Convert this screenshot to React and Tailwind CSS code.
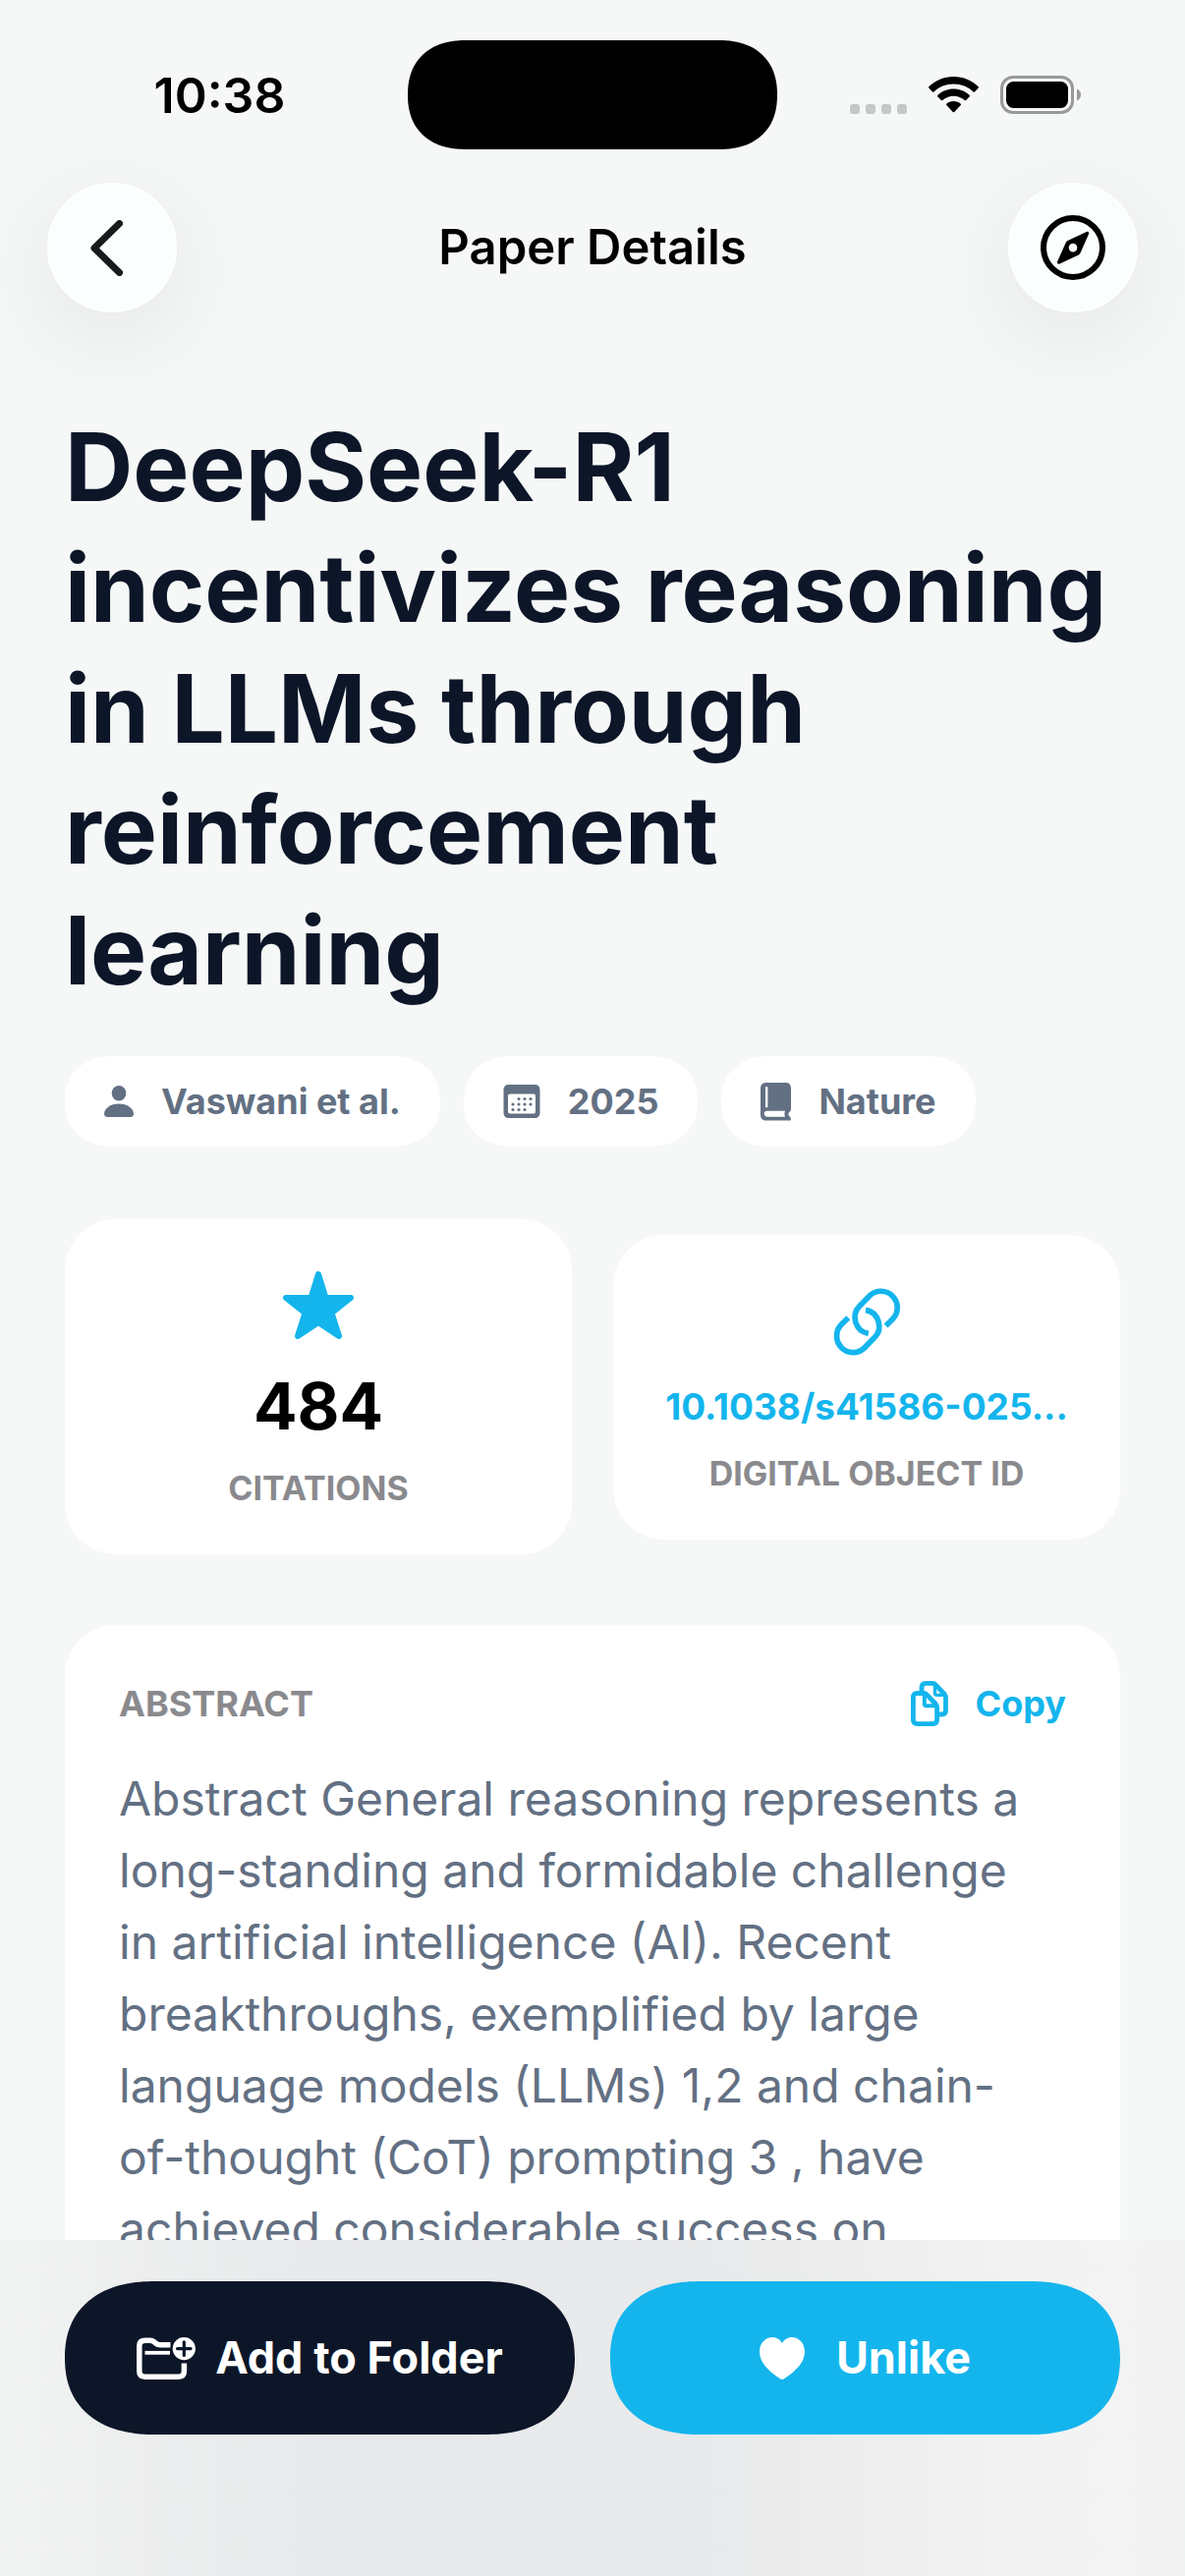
const abstractText =
  'Abstract General reasoning represents a long-standing and formidable challenge in artificial intelligence (AI). Recent breakthroughs, exemplified by large language models (LLMs) 1,2 and chain-of-thought (CoT) prompting 3 , have achieved considerable success on'

function WifiIcon({ className }) {
  return (
    <svg viewBox="0 0 51 37" className={className} fill="currentColor" aria-hidden="true">
      <path d="M25.500 0C35.300 0 44.200 3.900 50.700 10.200c.4.400.4 1 0 1.400l-3.700 3.800c-.4.400-1 .4-1.400 0C40.300 10.300 33.300 7.400 25.500 7.400S10.700 10.300 5.400 15.400c-.4.400-1 .4-1.400 0L.3 11.600c-.4-.4-.4-1 0-1.400C6.800 3.900 15.700 0 25.500 0z" />
      <path d="M25.500 12.500c6.300 0 12 2.400 16.300 6.400.4.400.4 1 0 1.400l-3.700 3.700c-.4.400-1 .4-1.400 0-3-2.700-6.900-4.300-11.200-4.300s-8.200 1.600-11.200 4.300c-.4.400-1 .4-1.400 0l-3.700-3.700c-.4-.4-.4-1 0-1.400 4.300-4 10-6.400 16.300-6.400z" />
      <path d="M25.500 25c2.800 0 5.400 1 7.300 2.700.4.400.4 1 0 1.400l-6.600 6.900c-.4.400-1 .4-1.400 0l-6.600-6.900c-.4-.4-.4-1 0-1.400 1.900-1.700 4.500-2.700 7.300-2.700z" />
    </svg>
  )
}

function BatteryIcon({ className }) {
  return (
    <svg viewBox="0 0 82 39" className={className} aria-hidden="true">
      <rect x="1.500" y="1.500" width="72" height="36" rx="11.500" fill="none" stroke="#989a99" strokeWidth="3" />
      <rect x="6" y="6" width="63" height="27" rx="7.500" fill="#000" />
      <path d="M78 13.500c2.400 1 4 3.300 4 6s-1.600 5-4 6z" fill="#989a99" />
    </svg>
  )
}

function CompassIcon({ className }) {
  return (
    <svg viewBox="0 0 66 66" className={className} aria-hidden="true">
      <circle cx="33" cy="33" r="30" fill="none" stroke="currentColor" strokeWidth="6" />
      <path fill="currentColor" fillRule="evenodd" d="M46.700 17c1.500-.8 3 .5 2.300 2.200L40.500 38.500c-.4.900-.9 1.400-1.800 1.900L19.500 49.500c-1.600.8-3.200-.6-2.400-2.300L25.700 28c.4-.9.900-1.400 1.800-1.900zM33 28.800a4.300 4.300 0 1 0 0 8.600 4.300 4.300 0 0 0 0-8.600z" />
    </svg>
  )
}

function PersonIcon({ className }) {
  return (
    <svg viewBox="0 0 30 32" className={className} fill="currentColor" aria-hidden="true">
      <ellipse cx="15" cy="7.700" rx="7.300" ry="7.700" />
      <path d="M15 18.600c8.600 0 15 5 15 10.200 0 2-1.200 3.200-3.400 3.200H3.400C1.200 32 0 30.800 0 28.800 0 23.600 6.400 18.600 15 18.600z" />
    </svg>
  )
}

function CalendarIcon({ className }) {
  const dots = [[16, 14.5], [22, 14.5], [28, 14.5], [10, 20], [16, 20], [22, 20], [28, 20], [10, 25.5], [16, 25.5], [22, 25.5]]
  return (
    <svg viewBox="0 0 38 34" className={className} fill="currentColor" aria-hidden="true">
      <path fillRule="evenodd" d="M6 0h26c3.500 0 5.500 2 5.500 5.500v23c0 3.500-2 5.500-5.500 5.500H6C2.500 34 .5 32 .5 28.500v-23C.5 2 2.500 0 6 0zM7 9.500c-1.300 0-2 .7-2 2v16c0 1.300.7 2 2 2h24c1.300 0 2-.7 2-2v-16c0-1.300-.7-2-2-2z" />
      {dots.map(([x, y]) => (
        <circle key={`${x}-${y}`} cx={x} cy={y} r="1.600" />
      ))}
    </svg>
  )
}

function BookIcon({ className }) {
  return (
    <svg viewBox="0 0 31 39" className={className} fill="currentColor" aria-hidden="true">
      <path fillRule="evenodd" d="M6 0h19.500C29 0 31 2 31 5.500v21.300c0 1-.4 1.900-1.200 2.600-1 .9-1.400 1.700-1.400 2.500s.5 1.800 1.400 2.700c1.500 1.500 1.600 4-.3 4H6c-4 0-6-2-6-5.800V6c0-4 2-6 6-6zM6.200 4c-.8 0-1.200.5-1.200 1.200v19c0 .8.400 1.200 1.200 1.200s1.200-.4 1.200-1.200v-19C7.400 4.500 7 4 6.200 4zM6.800 28.800c-2 0-3.100 1-3.100 2.800s1.200 3.200 3.100 3.200h18.300c-1-1.900-1-4.100 0-6z" />
    </svg>
  )
}

function StarIcon({ className }) {
  return (
    <svg viewBox="0 0 72 69" className={className} fill="currentColor" stroke="currentColor" strokeWidth="6" strokeLinejoin="round" aria-hidden="true">
      <path d="M36 3l7.500 24H69L49.500 42.500 57 66 36 52 15 66l7.500-23.500L3 27h25.500z" />
    </svg>
  )
}

function LinkIcon({ className }) {
  return (
    <svg viewBox="0 0 69 69" className={className} fill="none" stroke="currentColor" strokeWidth="5.700" aria-hidden="true">
      <path d="M53.500 38.600L60.800 31.300A16.700 16.700 0 0 0 37.200 7.700L26.900 18.200A16.700 16.700 0 0 0 35.800 46.400" />
      <path d="M15.300 30.200L8 37.500A16.700 16.700 0 0 0 31.600 61.100L41.900 50.600A16.700 16.700 0 0 0 33 22.400" />
    </svg>
  )
}

function CopyIcon({ className }) {
  return (
    <svg viewBox="0 0 38 46" className={className} fill="none" stroke="currentColor" strokeWidth="4.800" strokeLinejoin="round" aria-hidden="true">
      <path d="M11 11V6.400c0-2.700 1.300-4 4-4h7c1.300 0 2.100.3 3 1.300l9.300 9.800c.9 1 1.200 1.800 1.200 3V30c0 2.900-1.300 4-4 4h-3" />
      <path d="M24.500 4v8.300c0 1.400.7 2.100 2 2.100h8" strokeWidth="3.400" />
      <path d="M6.400 12.500h6.800c1.300 0 2.100.3 3 1.300l9.200 9.700c.9 1 1.200 1.800 1.200 3.200v12.900c0 2.700-1.300 4-4 4H6.400c-2.700 0-4-1.300-4-4V16.500c0-2.700 1.300-4 4-4z" />
      <path d="M13.800 13.500v9.700c0 1.300.7 2 2 2H26" strokeWidth="4" />
    </svg>
  )
}

function FolderPlusIcon({ className }) {
  return (
    <svg viewBox="0 0 60 43" className={className} fill="none" stroke="currentColor" strokeWidth="5.500" aria-hidden="true">
      <path d="M34.500 7.800H24c-2 0-3-.4-4.500-1.700l-1.300-1.100c-1.500-1.200-2.600-1.700-4.600-1.700H8.800c-4 0-6 2-6 5.500v25.800c0 3.700 2 5.600 5.800 5.600h34.100c3.800 0 5.700-1.900 5.700-5.600v-8" />
      <path d="M8.500 15.800H34" strokeWidth="3.800" />
      <circle cx="48.300" cy="11.600" r="11.600" fill="currentColor" stroke="none" />
      <path d="M48.300 4.800v13.600M41.500 11.600h13.600" stroke="#0c1628" strokeWidth="3.200" strokeLinecap="round" />
    </svg>
  )
}

function HeartIcon({ className }) {
  return (
    <svg viewBox="0 0 46 43" className={className} fill="currentColor" aria-hidden="true">
      <path d="M23 43c-.6 0-1.400-.4-2-.8C7.700 33.700 0 24.300 0 14.700 0 6.200 5.800 0 13.300 0 17.600 0 21 2.400 23 6.100 25 2.400 28.500 0 32.700 0 40.200 0 46 6.200 46 14.700c0 9.600-7.700 19-21 27.500-.6.400-1.400.8-2 .8z" />
    </svg>
  )
}

function StatusBar() {
  return (
    <div className="grid grid-cols-[1fr_376px_1fr] items-center pt-[41px]">
      <span className="pl-8 text-center text-[50px] leading-none font-semibold">10:38</span>
      <span className="h-[111px] rounded-[60px/56px] bg-black [corner-shape:superellipse(1.2)]" />
      <div className="flex items-center pl-[74px]">
        <span className="flex gap-1.5 pt-7">
          {[0, 1, 2, 3].map((n) => (
            <span key={n} className="size-2.5 rounded-[3px] bg-[#c6c8c7]" />
          ))}
        </span>
        <WifiIcon className="ml-[22px] h-[37px] w-[51px]" />
        <BatteryIcon className="ml-[22px] h-[39px] w-[82px]" />
      </div>
    </div>
  )
}

function RoundButton({ label, children }) {
  return (
    <button
      type="button"
      aria-label={label}
      className="flex size-[132px] items-center justify-center rounded-full border-2 border-white bg-[#fbfeff] shadow-[0_24px_96px_rgba(0,0,0,0.08)]"
    >
      {children}
    </button>
  )
}

function Chip({ icon, children }) {
  return (
    <li className="flex h-[92px] items-center gap-7 rounded-[52px/46px] bg-white px-10 text-[36px] font-bold text-[#637083] [corner-shape:superellipse(1.2)]">
      {icon}
      {children}
    </li>
  )
}

function App() {
  return (
    <div className="flex h-screen flex-col overflow-hidden bg-[#f6f8f7] font-['Inter',sans-serif] text-black">
      <header>
        <StatusBar />
        <div className="flex items-center justify-between px-12 pt-[34px]">
          <RoundButton label="Back">
            <svg viewBox="0 0 33 57" className="mr-3 h-[57px] w-[33px]" fill="none" stroke="#161b1c" strokeWidth="7" strokeLinecap="round" strokeLinejoin="round" aria-hidden="true">
              <path d="M29.500 3.500L4 28.500l25.500 25" />
            </svg>
          </RoundButton>
          <span className="text-[49px] font-semibold">Paper Details</span>
          <RoundButton label="Open in browser">
            <CompassIcon className="size-[66px]" />
          </RoundButton>
        </div>
      </header>

      <main className="min-h-0 flex-1 overflow-hidden px-[66px] pt-24">
        <h1 className="pr-2 text-[96px] leading-[123px] font-bold text-[#0c1628]">
          DeepSeek-R1 incentivizes reasoning in LLMs through reinforcement learning
        </h1>

        <ul className="mt-[46px] flex gap-6">
          <Chip icon={<PersonIcon className="h-8 w-[30px]" />}>Vaswani et al.</Chip>
          <Chip icon={<CalendarIcon className="h-[34px] w-[38px]" />}>2025</Chip>
          <Chip icon={<BookIcon className="h-[39px] w-[31px]" />}>Nature</Chip>
        </ul>

        <div className="mt-[74px] grid grid-cols-2 items-center gap-[42px]">
          <section className="flex flex-col items-center rounded-[52px] bg-white px-12 pt-[53px] pb-[46px]">
            <StarIcon className="h-[69px] w-[72px] text-[#14b5ed]" />
            <span className="mt-8 text-[66px] leading-[72px] font-bold">484</span>
            <span className="mt-[26px] text-[34px] leading-[43px] font-bold text-[#8a8a8e]">CITATIONS</span>
          </section>
          <section className="flex flex-col items-center rounded-[52px] bg-white px-12 pt-[54px] pb-[46px] text-[#14b5ed]">
            <LinkIcon className="size-[69px]" />
            <a href="#doi" className="mt-7 max-w-full truncate text-[37px] leading-[48px] font-bold">10.1038/s41586-025...</a>
            <span className="mt-[22px] text-[34px] leading-[43px] font-bold text-[#8a8a8e]">DIGITAL OBJECT ID</span>
          </section>
        </div>

        <section className="mt-[72px] rounded-[52px] bg-white px-[55px] pt-[52px] pb-14">
          <div className="flex items-center justify-between">
            <h2 className="text-[36px] leading-[56px] font-bold text-[#8a8a8e]">ABSTRACT</h2>
            <button type="button" className="flex items-center gap-7 text-[36px] font-bold text-[#14b5ed]">
              <CopyIcon className="h-[46px] w-[38px]" />
              Copy
            </button>
          </div>
          <p className="mt-8 pr-6 text-[48px] leading-[73px] text-[#637083]">{abstractText}</p>
        </section>
      </main>

      <footer className="flex gap-9 bg-[linear-gradient(to_right,#f2f4f3,#ecedee_14%,#e8e9eb_28%,#e9eaeb_62%,#f3f3f3_88%,#f2f4f3)] px-[66px] pt-[42px] pb-36 text-[45px] font-bold text-white">
        <button type="button" className="flex h-[156px] flex-1 items-center justify-center gap-5 rounded-[92px/78px] bg-[#0c1628] [corner-shape:superellipse(1.2)]">
          <FolderPlusIcon className="h-[43px] w-[60px]" />
          Add to Folder
        </button>
        <button type="button" className="flex h-[156px] flex-1 items-center justify-center gap-8 rounded-[92px/78px] bg-[#14b5ed] [corner-shape:superellipse(1.2)]">
          <HeartIcon className="h-[43px] w-[46px]" />
          Unlike
        </button>
      </footer>
    </div>
  )
}

export default App
